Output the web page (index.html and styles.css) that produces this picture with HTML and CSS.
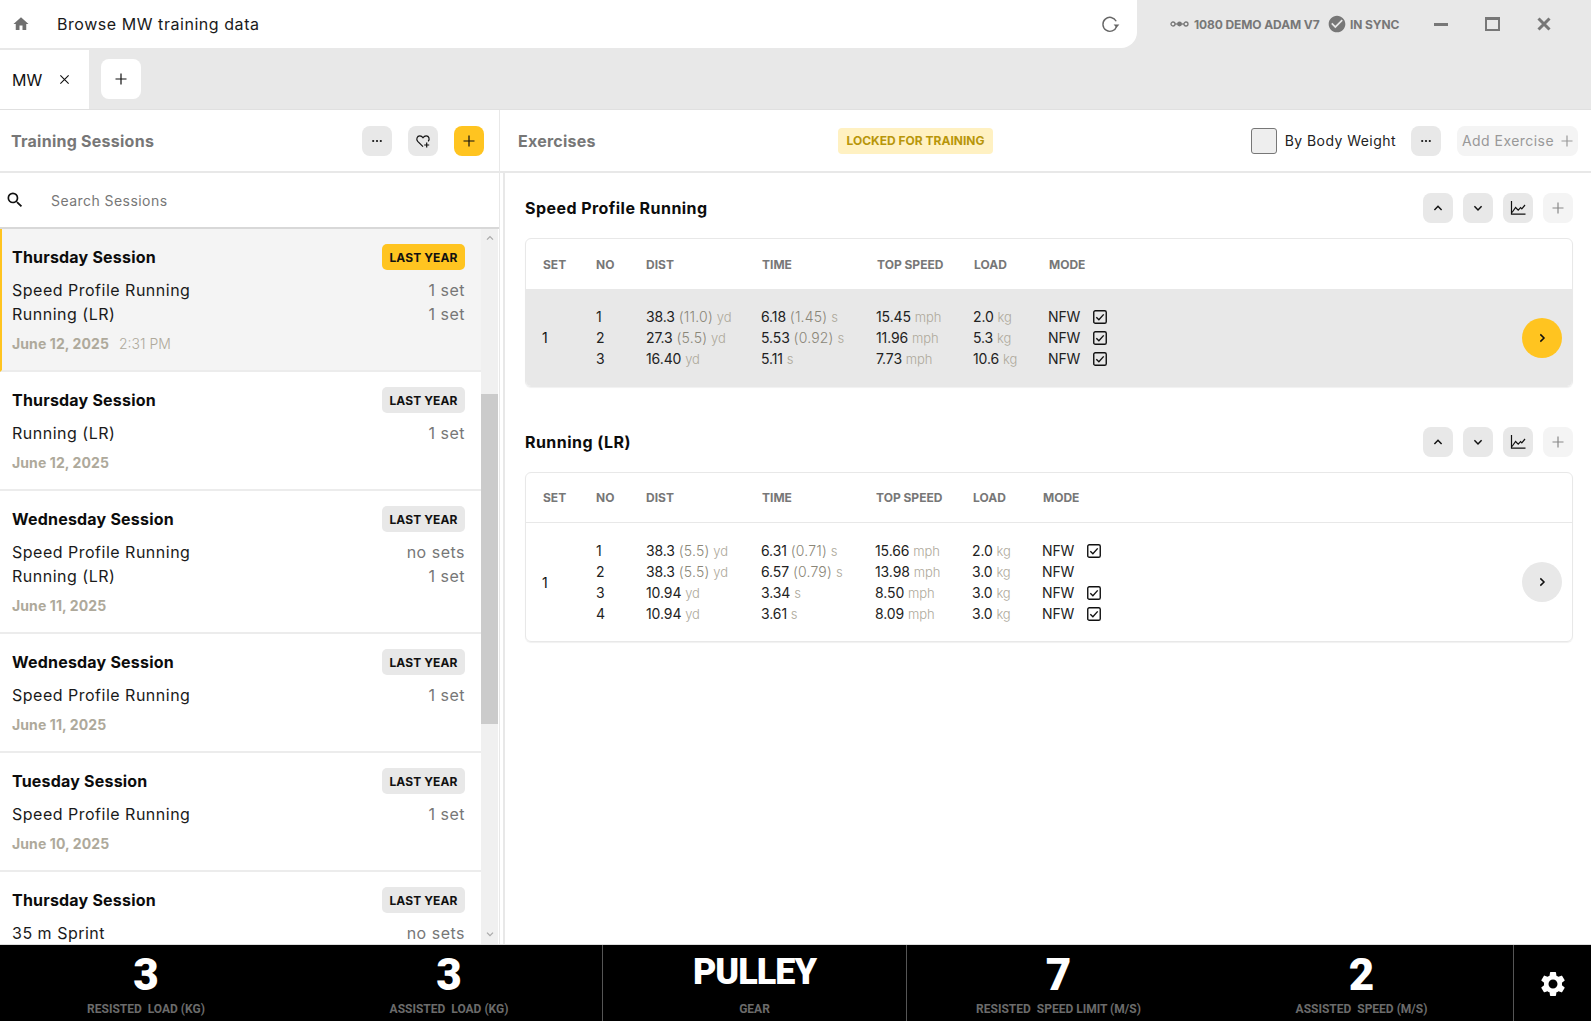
FILE: index.html
```html
<!DOCTYPE html>
<html lang="en">
<head>
<meta charset="utf-8">
<title>Browse MW training data</title>
<link rel="stylesheet" href="styles.css">
</head>
<body>
<svg class="defs" aria-hidden="true">
  <symbol id="i-dots" viewBox="0 0 12 12"><circle cx="2.2" cy="6" r="1.1"/><circle cx="6" cy="6" r="1.1"/><circle cx="9.8" cy="6" r="1.1"/></symbol>
  <symbol id="i-plus" viewBox="0 0 12 12"><path d="M6 .5v11M.5 6h11" fill="none" stroke="currentColor" stroke-width="1.2"/></symbol>
  <symbol id="i-up" viewBox="0 0 12 12"><path d="M2.4 8 6 4.3 9.6 8" fill="none" stroke="currentColor" stroke-width="1.5"/></symbol>
  <symbol id="i-down" viewBox="0 0 12 12"><path d="M2.4 4.3 6 8l3.6-3.7" fill="none" stroke="currentColor" stroke-width="1.5"/></symbol>
  <symbol id="i-right" viewBox="0 0 12 12"><path d="M4.3 2.4 8 6 4.3 9.6" fill="none" stroke="currentColor" stroke-width="1.5"/></symbol>
  <symbol id="i-graph" viewBox="0 0 16 16"><path d="M1.5 1v13.2H15.5" fill="none" stroke="currentColor" stroke-width="1.2"/><path d="M2 12.5l3.6-5 2.6 2.6 2.4-2.4 1.2 1.2L15 5" fill="none" stroke="currentColor" stroke-width="1.2"/></symbol>
  <symbol id="i-check" viewBox="0 0 14 14"><rect x=".75" y=".75" width="12.5" height="12.5" rx="1.6" fill="none" stroke="currentColor" stroke-width="1.4"/><path d="M3.3 7.2l2.6 2.6 4.8-5.4" fill="none" stroke="currentColor" stroke-width="1.4"/></symbol>
</svg>

<div class="app">
  <header class="topbar">
    <div class="address">
      <svg class="home" viewBox="0 0 24 24"><path d="M10 20v-6h4v6h5v-8h3L12 3 2 12h3v8z"/></svg>
      <span class="address-text">Browse MW training data</span>
      <svg class="reload" viewBox="0 0 20 20"><path d="M16.2 7.2A7 7 0 1 0 16.6 12.5" fill="none" stroke="currentColor" stroke-width="1.4"/><path d="M13.6 10.4h5.8l-2.9 3.4z"/></svg>
    </div>
    <div class="status">
      <svg class="link" viewBox="0 0 19 8"><circle cx="3" cy="4" r="2" fill="none" stroke="currentColor" stroke-width="1.3"/><circle cx="9.5" cy="4" r="2.4"/><circle cx="16" cy="4" r="2" fill="none" stroke="currentColor" stroke-width="1.3"/><path d="M5 4h9" stroke="currentColor" stroke-width="1.3"/></svg>
      <span class="status-text device">1080 DEMO ADAM V7</span>
      <svg class="sync" viewBox="0 0 24 24"><path d="M12 2C6.48 2 2 6.48 2 12s4.48 10 10 10 10-4.48 10-10S17.52 2 12 2zm-2 15l-5-5 1.41-1.41L10 14.17l7.59-7.59L19 8l-9 9z"/></svg>
      <span class="status-text">IN SYNC</span>
    </div>
    <div class="window">
      <span class="win-min"></span>
      <span class="win-max"></span>
      <svg class="win-close" viewBox="0 0 14 14"><path d="M1.5 1.5l11 11M12.500 1.500l-11 11" stroke="currentColor" stroke-width="3"/></svg>
    </div>
  </header>

  <nav class="tabs">
    <div class="tab">
      <span class="tab-name">MW</span>
      <svg class="tab-x" viewBox="0 0 12 12"><path d="M1.500 1.500l9 9M10.500 1.500l-9 9" stroke="currentColor" stroke-width="1.2"/></svg>
    </div>
    <button class="tab-add"><svg class="ic12"><use href="#i-plus"/></svg></button>
  </nav>

  <main class="main">
    <aside class="left">
      <div class="panel-head left-head">
        <h2 class="panel-title">Training Sessions</h2>
        <div class="head-btns">
          <button class="btn"><svg class="ic12"><use href="#i-dots"/></svg></button>
          <button class="btn"><svg class="ic16" viewBox="0 0 16 16"><path d="M8 13.600 2.700 8.300C.9 6.400 2 2.800 4.800 2.800c1.500 0 2.500.8 3.200 1.900.7-1.100 1.700-1.900 3.200-1.900 2.800 0 3.800 3.400 2 5.500M11.700 9.500v5M9.200 12h5" fill="none" stroke="currentColor" stroke-width="1.200"/></svg></button>
          <button class="btn btn-yellow"><svg class="ic12"><use href="#i-plus"/></svg></button>
        </div>
      </div>
      <div class="search">
        <svg class="search-ic" viewBox="0 0 24 24"><path d="M15.500 14h-.79l-.28-.27A6.470 6.470 0 0 0 16 9.500 6.500 6.500 0 1 0 9.500 16c1.610 0 3.090-.59 4.230-1.570l.27.28v.79l5 4.990L20.490 19l-4.990-5zm-6 0C7.010 14 5 11.990 5 9.500S7.010 5 9.500 5 14 7.010 14 9.500 11.990 14 9.500 14z"/></svg>
        <span class="search-text">Search Sessions</span>
      </div>
      <div class="list-wrap">
        <div class="list">
          <article class="session active">
            <div class="s-head"><h3 class="s-title">Thursday Session</h3><span class="s-badge badge-yellow">LAST YEAR</span></div>
            <div class="s-row"><span>Speed Profile Running</span><span class="s-sets">1 set</span></div>
            <div class="s-row"><span>Running (LR)</span><span class="s-sets">1 set</span></div>
            <div class="s-date"><b>June 12, 2025</b><span class="s-time">2:31 PM</span></div>
          </article>
          <article class="session">
            <div class="s-head"><h3 class="s-title">Thursday Session</h3><span class="s-badge">LAST YEAR</span></div>
            <div class="s-row"><span>Running (LR)</span><span class="s-sets">1 set</span></div>
            <div class="s-date"><b>June 12, 2025</b></div>
          </article>
          <article class="session">
            <div class="s-head"><h3 class="s-title">Wednesday Session</h3><span class="s-badge">LAST YEAR</span></div>
            <div class="s-row"><span>Speed Profile Running</span><span class="s-sets">no sets</span></div>
            <div class="s-row"><span>Running (LR)</span><span class="s-sets">1 set</span></div>
            <div class="s-date"><b>June 11, 2025</b></div>
          </article>
          <article class="session">
            <div class="s-head"><h3 class="s-title">Wednesday Session</h3><span class="s-badge">LAST YEAR</span></div>
            <div class="s-row"><span>Speed Profile Running</span><span class="s-sets">1 set</span></div>
            <div class="s-date"><b>June 11, 2025</b></div>
          </article>
          <article class="session">
            <div class="s-head"><h3 class="s-title">Tuesday Session</h3><span class="s-badge">LAST YEAR</span></div>
            <div class="s-row"><span>Speed Profile Running</span><span class="s-sets">1 set</span></div>
            <div class="s-date"><b>June 10, 2025</b></div>
          </article>
          <article class="session">
            <div class="s-head"><h3 class="s-title">Thursday Session</h3><span class="s-badge">LAST YEAR</span></div>
            <div class="s-row"><span>35 m Sprint</span><span class="s-sets">no sets</span></div>
          </article>
        </div>
        <div class="scrollbar">
          <svg class="sb-arrow"><use href="#i-up"/></svg>
          <div class="sb-thumb"></div>
          <svg class="sb-arrow sb-bottom"><use href="#i-down"/></svg>
        </div>
      </div>
    </aside>

    <section class="right">
      <div class="panel-head right-head">
        <h2 class="panel-title">Exercises</h2>
        <span class="locked">LOCKED FOR TRAINING</span>
        <div class="right-tools">
          <span class="checkbox"></span>
          <span class="by-weight">By Body Weight</span>
          <button class="btn"><svg class="ic12"><use href="#i-dots"/></svg></button>
          <button class="add-ex">Add Exercise<svg class="ic12"><use href="#i-plus"/></svg></button>
        </div>
      </div>
      <div class="exercises">
        <section class="ex">
          <div class="ex-head">
            <h3 class="ex-title">Speed Profile Running</h3>
            <div class="ex-btns">
              <button class="btn"><svg class="ic12"><use href="#i-up"/></svg></button>
              <button class="btn"><svg class="ic12"><use href="#i-down"/></svg></button>
              <button class="btn"><svg class="ic16"><use href="#i-graph"/></svg></button>
              <button class="btn btn-faint"><svg class="ic12"><use href="#i-plus"/></svg></button>
            </div>
          </div>
          <div class="card">
            <div class="grid cols-a th">
              <span>SET</span><span>NO</span><span>DIST</span><span>TIME</span><span>TOP SPEED</span><span>LOAD</span><span>MODE</span>
            </div>
            <div class="tb tb-active">
              <div class="set">1</div>
              <div class="rows">
                <div class="grid cols-a-body tr"><span>1</span><span>38.3 <i>(11.0)</i> <u>yd</u></span><span>6.18 <i>(1.45)</i> <u>s</u></span><span>15.45 <u>mph</u></span><span>2.0 <u>kg</u></span><span class="mode">NFW<svg class="chk"><use href="#i-check"/></svg></span></div>
                <div class="grid cols-a-body tr"><span>2</span><span>27.3 <i>(5.5)</i> <u>yd</u></span><span>5.53 <i>(0.92)</i> <u>s</u></span><span>11.96 <u>mph</u></span><span>5.3 <u>kg</u></span><span class="mode">NFW<svg class="chk"><use href="#i-check"/></svg></span></div>
                <div class="grid cols-a-body tr"><span>3</span><span>16.40 <u>yd</u></span><span>5.11 <u>s</u></span><span>7.73 <u>mph</u></span><span>10.6 <u>kg</u></span><span class="mode">NFW<svg class="chk"><use href="#i-check"/></svg></span></div>
              </div>
              <button class="go go-yellow"><svg class="ic12"><use href="#i-right"/></svg></button>
            </div>
          </div>
        </section>
        <section class="ex">
          <div class="ex-head">
            <h3 class="ex-title">Running (LR)</h3>
            <div class="ex-btns">
              <button class="btn"><svg class="ic12"><use href="#i-up"/></svg></button>
              <button class="btn"><svg class="ic12"><use href="#i-down"/></svg></button>
              <button class="btn"><svg class="ic16"><use href="#i-graph"/></svg></button>
              <button class="btn btn-faint"><svg class="ic12"><use href="#i-plus"/></svg></button>
            </div>
          </div>
          <div class="card">
            <div class="grid cols-b th th-line">
              <span>SET</span><span>NO</span><span>DIST</span><span>TIME</span><span>TOP SPEED</span><span>LOAD</span><span>MODE</span>
            </div>
            <div class="tb">
              <div class="set">1</div>
              <div class="rows">
                <div class="grid cols-b-body tr"><span>1</span><span>38.3 <i>(5.5)</i> <u>yd</u></span><span>6.31 <i>(0.71)</i> <u>s</u></span><span>15.66 <u>mph</u></span><span>2.0 <u>kg</u></span><span class="mode">NFW<svg class="chk"><use href="#i-check"/></svg></span></div>
                <div class="grid cols-b-body tr"><span>2</span><span>38.3 <i>(5.5)</i> <u>yd</u></span><span>6.57 <i>(0.79)</i> <u>s</u></span><span>13.98 <u>mph</u></span><span>3.0 <u>kg</u></span><span class="mode">NFW</span></div>
                <div class="grid cols-b-body tr"><span>3</span><span>10.94 <u>yd</u></span><span>3.34 <u>s</u></span><span>8.50 <u>mph</u></span><span>3.0 <u>kg</u></span><span class="mode">NFW<svg class="chk"><use href="#i-check"/></svg></span></div>
                <div class="grid cols-b-body tr"><span>4</span><span>10.94 <u>yd</u></span><span>3.61 <u>s</u></span><span>8.09 <u>mph</u></span><span>3.0 <u>kg</u></span><span class="mode">NFW<svg class="chk"><use href="#i-check"/></svg></span></div>
              </div>
              <button class="go"><svg class="ic12"><use href="#i-right"/></svg></button>
            </div>
          </div>
        </section>
      </div>
    </section>
  </main>

  <footer class="footer">
    <div class="f-group f-two">
      <div class="stat"><div class="stat-val">3</div><div class="stat-lab">RESISTED&nbsp; LOAD (KG)</div></div>
      <div class="stat"><div class="stat-val">3</div><div class="stat-lab">ASSISTED&nbsp; LOAD (KG)</div></div>
    </div>
    <div class="f-group f-gear">
      <div class="stat"><div class="stat-val stat-word">PULLEY</div><div class="stat-lab">GEAR</div></div>
    </div>
    <div class="f-group f-speed">
      <div class="stat"><div class="stat-val">7</div><div class="stat-lab">RESISTED&nbsp; SPEED LIMIT (M/S)</div></div>
      <div class="stat"><div class="stat-val">2</div><div class="stat-lab">ASSISTED&nbsp; SPEED (M/S)</div></div>
    </div>
    <div class="f-settings">
      <svg class="gear" viewBox="0 0 24 24"><path d="M19.140 12.940c.04-.3.06-.61.06-.94 0-.32-.02-.64-.07-.94l2.030-1.580a.49.49 0 0 0 .12-.61l-1.920-3.320a.488.488 0 0 0-.59-.22l-2.390.96c-.5-.38-1.030-.7-1.620-.94l-.36-2.540a.484.484 0 0 0-.48-.41h-3.840c-.24 0-.43.17-.47.41l-.36 2.540c-.59.24-1.130.57-1.620.94l-2.390-.96c-.22-.08-.47 0-.59.22L2.740 8.870c-.12.21-.08.47.12.61l2.030 1.580c-.05.3-.09.63-.09.94s.02.64.07.94l-2.030 1.580a.49.49 0 0 0-.12.61l1.920 3.320c.12.22.37.29.59.22l2.390-.96c.5.38 1.030.7 1.620.94l.36 2.540c.05.24.24.41.48.41h3.840c.24 0 .44-.17.47-.41l.36-2.540c.59-.24 1.130-.56 1.620-.94l2.390.96c.22.08.47 0 .59-.22l1.920-3.320c.12-.22.07-.47-.12-.61l-2.010-1.580zM12 15.600c-1.980 0-3.600-1.620-3.600-3.600s1.620-3.600 3.600-3.600 3.600 1.620 3.600 3.600-1.620 3.600-3.600 3.600z"/></svg>
    </div>
  </footer>
</div>
</body>
</html>
```

FILE: styles.css
```css
* { box-sizing: border-box; }
html, body { margin: 0; height: 100%; overflow: hidden; }
body { font-family: Inter, "Noto Sans", sans-serif; font-size: 14px; color: #111; background: #e8e8e8; letter-spacing: .3px; }
h2, h3 { margin: 0; }
button { border: 0; padding: 0; font: inherit; cursor: pointer; color: inherit; }
i { font-style: normal; }
u { text-decoration: none; }
.defs { position: absolute; width: 0; height: 0; }
.app { height: 1021px; display: flex; flex-direction: column; }

/* top bar */
.topbar { height: 48px; flex: none; display: flex; align-items: center; }
.address { width: 1137px; height: 48px; background: #fff; border-bottom-right-radius: 16px; display: flex; align-items: center; padding-left: 12px; }
.home { width: 18px; height: 18px; fill: #707070; flex: none; }
.address-text { font-size: 16px; margin-left: 27px; flex: 1; letter-spacing: .55px; color: #1a1a1a; }
.reload { width: 20px; height: 20px; color: #666; fill: #666; margin-right: 17px; }
.status { display: flex; align-items: center; margin-left: 33px; color: #777; }
.link { width: 19px; height: 8px; fill: #777; }
.status-text { font-size: 12px; font-weight: 700; margin-left: 5px; letter-spacing: -.1px; }
.device { width: 130px; }
.sync { width: 20px; height: 20px; fill: #777; margin-left: 3px; }
.status-text:last-child { margin-left: 3px; }
.window { display: flex; align-items: center; margin-left: 35px; color: #777; }
.win-min { width: 14px; height: 3px; background: #777; }
.win-max { width: 15px; height: 14px; border: 2px solid #777; border-top-width: 3px; margin-left: 37px; }
.win-close { width: 14px; height: 14px; margin-left: 37px; }

/* tabs */
.tabs { height: 61px; flex: none; display: flex; align-items: flex-end; position: relative; }
.tab { width: 89px; height: 59px; background: #fff; display: flex; align-items: center; padding-left: 12px; }
.tab-name { font-size: 16px; flex: 1; letter-spacing: 0; }
.tab-x { width: 11px; height: 11px; margin-right: 19px; }
.tab-add { width: 40px; height: 40px; background: #fff; border-radius: 8px; margin: 0 0 10px 12px; display: flex; align-items: center; justify-content: center; }
.ic12 { width: 12px; height: 12px; display: block; fill: currentColor; }
.ic16 { width: 16px; height: 16px; display: block; }

/* main */
.main { flex: 1; min-height: 0; display: flex; background: #fff; border-top: 1px solid #e0e0e0; }
.panel-head { height: 63px; border-bottom: 2px solid #e8e8e8; display: flex; align-items: center; flex: none; }
.panel-title { font-size: 16px; font-weight: 700; color: #777; letter-spacing: .25px; }
.left { width: 500px; flex: none; display: flex; flex-direction: column; border-right: 1px solid #e8e8e8; }
.left-head { padding: 0 16px 0 11px; justify-content: space-between; margin-right: -1px; }
.head-btns { display: flex; gap: 16px; }
.btn { width: 30px; height: 30px; background: #e8e8e8; border-radius: 8px; display: flex; align-items: center; justify-content: center; color: #111; flex: none; }
.btn-yellow { background: #ffc420; }
.btn-faint { background: #f4f4f4; color: #888; }
.search { height: 56px; border-bottom: 2px solid #d8d8d8; display: flex; align-items: center; padding-left: 5px; flex: none; }
.search-ic { width: 20px; height: 20px; fill: #111; }
.search-text { font-size: 14px; color: #777; margin-left: 26px; letter-spacing: .45px; }
.list-wrap { flex: 1; min-height: 0; display: flex; }
.list { width: 481px; flex: none; overflow: hidden; }
.session { padding: 15px 16px 0 12px; border-bottom: 2px solid #ececec; height: 119px; }
.session:has(.s-row + .s-row) { height: 143px; }
.session.active { background: #f4f4f4; border-left: 2px solid #ffc420; padding-left: 10px; }
.s-head { display: flex; justify-content: space-between; align-items: center; height: 26px; margin-bottom: 8px; }
.s-title { font-size: 16px; font-weight: 700; color: #0c0c0c; letter-spacing: .2px; }
.s-badge { width: 83px; height: 26px; border-radius: 5px; background: #e8e8e8; font-size: 12px; font-weight: 700; display: flex; align-items: center; justify-content: center; color: #111; letter-spacing: .1px; }
.badge-yellow { background: #ffc420; }
.s-row { display: flex; justify-content: space-between; font-size: 16px; line-height: 24px; letter-spacing: .5px; color: #1a1a1a; }
.s-sets { color: #777; }
.s-date { margin-top: 10px; line-height: 16px; font-size: 14px; color: #aea99b; }
.s-date b { font-weight: 700; letter-spacing: .1px; }
.s-time { margin-left: 10px; letter-spacing: 0; font-weight: 300; }
.scrollbar { width: 17px; flex: none; background: #f0f0f0; display: flex; flex-direction: column; align-items: center; }
.sb-arrow { width: 10px; height: 10px; color: #aaa; flex: none; margin-top: 4px; }
.sb-thumb { width: 17px; height: 330px; background: #cbcbcb; margin-top: 151px; flex: none; }
.sb-bottom { margin-top: 205px; }

/* right */
.right { flex: 1; min-width: 0; display: flex; flex-direction: column; }
.right-head { display: grid; grid-template-columns: 320px auto 1fr; align-items: center; padding: 0 13px 0 19px; margin-left: -1px; }
.right-tools { display: flex; align-items: center; justify-content: flex-end; }
.locked { width: 155px; height: 26px; background: #fff1c2; color: #b8960a; border-radius: 4px; font-size: 12px; font-weight: 700; display: flex; align-items: center; justify-content: center; letter-spacing: 0; }
.checkbox { width: 26px; height: 26px; background: #eee; border: 1px solid #777; border-radius: 3px; }
.by-weight { font-size: 14px; margin: 0 15px 0 8px; color: #222; letter-spacing: .45px; }
.add-ex { width: 121px; height: 30px; background: #f4f4f4; border-radius: 8px; margin-left: 16px; color: #999; display: flex; align-items: center; justify-content: center; gap: 7px; font-size: 14px; letter-spacing: .45px; }
.exercises { flex: 1; min-height: 0; margin-left: 3px; border-left: 2px solid #e8e8e8; padding: 20px 18px 0 20px; display: flex; flex-direction: column; gap: 40px; }
.ex-head { display: flex; justify-content: space-between; align-items: center; height: 30px; margin-bottom: 15px; }
.ex-title { font-size: 16px; font-weight: 700; letter-spacing: .45px; color: #0c0c0c; }
.ex-btns { display: flex; gap: 10px; }
.card { border: 1px solid #e8e8e8; border-radius: 6px; overflow: hidden; box-shadow: 0 1px 1px rgba(0,0,0,.06); }
.grid { display: grid; }
.cols-a { grid-template-columns: 53px 50px 116px 115px 97px 75px auto; }
.cols-b { grid-template-columns: 53px 50px 116px 114px 97px 70px auto; }
.cols-a-body { grid-template-columns: 50px 115px 115px 97px 75px auto; }
.cols-b-body { grid-template-columns: 50px 115px 114px 97px 70px auto; }
.th { height: 50px; align-items: center; padding-left: 17px; font-size: 12px; font-weight: 700; color: #777; letter-spacing: 0; }
.th-line { border-bottom: 1px solid #e8e8e8; }
.tb { display: flex; align-items: center; padding: 17px 10px 17px 16px; position: relative; }
.tb-active { background: #e8e8e8; }
.set { width: 54px; flex: none; line-height: 21px; }
.rows { flex: 1; }
.tr { height: 21px; align-items: center; font-size: 14px; color: #222; letter-spacing: -.1px; }
.tr i { color: #8a8678; font-weight: 300; letter-spacing: .2px; }
.tr u { color: #aea99b; font-size: 13px; font-weight: 300; }
.mode { display: flex; align-items: center; gap: 13px; }
.chk { width: 14px; height: 14px; color: #111; }
.go { width: 40px; height: 40px; border-radius: 50%; background: #e8e8e8; flex: none; display: flex; align-items: center; justify-content: center; }
.go-yellow { background: #ffc420; }

/* footer */
.footer { height: 77px; flex: none; background: #000; border-top: 1px solid #ddd; display: flex; color: #fff; }
.f-group { display: grid; border-right: 1px solid #555; }
.f-two { width: 603px; grid-template-columns: 292px 1fr; column-gap: 4px; }
.f-gear { width: 304px; }
.f-speed { width: 607px; grid-template-columns: 1fr 1fr; }
.f-settings { flex: 1; display: flex; align-items: center; justify-content: center; padding-top: 2px; }
.stat { text-align: center; padding-top: 8px; }
.stat-val { font-family: Roboto, sans-serif; font-weight: 900; font-size: 44px; line-height: 44px; letter-spacing: 0; height: 44px; }
.stat-word { font-size: 36px; line-height: 38px; letter-spacing: -1px; }
.stat-lab { font-family: Roboto, sans-serif; font-weight: 700; font-size: 12px; color: #6b6b6b; line-height: 16px; margin-top: 4px; letter-spacing: 0; }
.gear { width: 30px; height: 30px; fill: #fff; }
```
